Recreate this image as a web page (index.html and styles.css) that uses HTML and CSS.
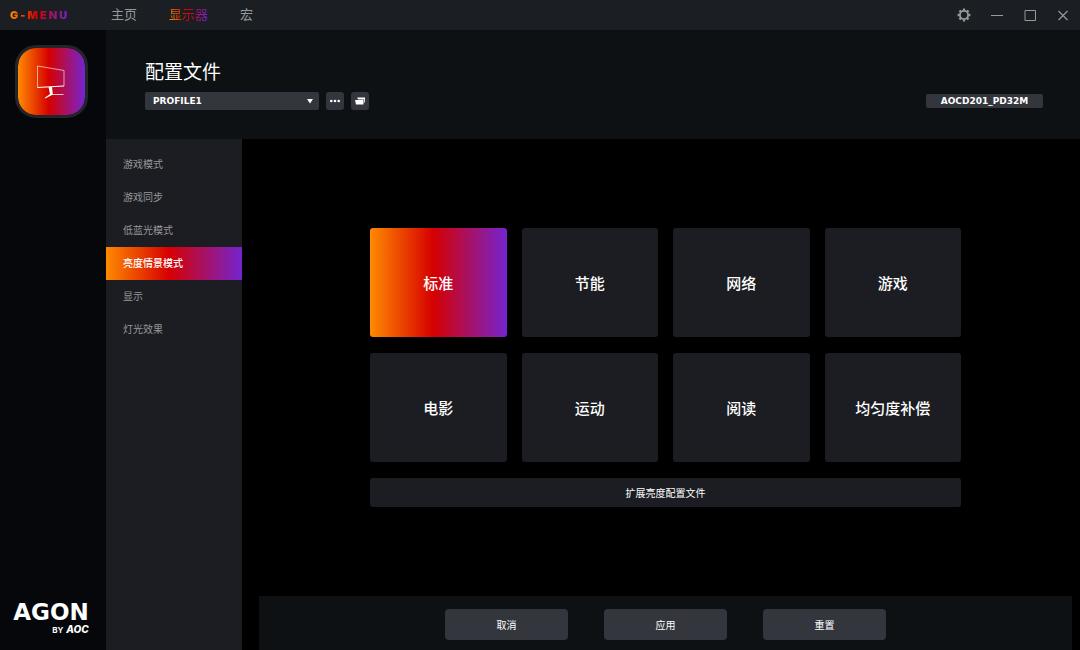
FILE: index.html
```html
<!DOCTYPE html>
<html lang="zh-CN">
<head>
<meta charset="utf-8">
<meta name="viewport" content="width=device-width, initial-scale=1">
<title>G-Menu</title>
<link rel="stylesheet" href="styles.css">
</head>
<body>
<div class="app">
  <header class="titlebar">
    <a class="brand" href="#">G-MENU</a>
    <nav class="topnav" aria-label="主导航">
      <a class="topnav-link" href="#">主页</a>
      <a class="topnav-link is-active" href="#" aria-current="page">显示器</a>
      <a class="topnav-link" href="#">宏</a>
    </nav>
    <div class="window-controls">
      <button class="window-button" type="button" aria-label="设置">
        <svg width="14" height="14" viewBox="0 0 14 14" fill="none" stroke="currentColor"><circle cx="7" cy="7" r="4.1" stroke-width="1.900"/><path d="M7 .6v2M7 11.4v2M.6 7h2M11.4 7h2M2.500 2.500l1.400 1.400M10.100 10.100l1.400 1.400M2.500 11.500l1.400-1.400M10.100 3.900l1.400-1.400" stroke-width="2.300"/></svg>
      </button>
      <button class="window-button" type="button" aria-label="最小化">
        <svg width="14" height="14" viewBox="0 0 14 14" fill="none" stroke="currentColor"><path d="M1 7.500h12"/></svg>
      </button>
      <button class="window-button" type="button" aria-label="最大化">
        <svg width="14" height="14" viewBox="0 0 14 14" fill="none" stroke="currentColor"><path d="M2 2.500h10.500v10H2z"/></svg>
      </button>
      <button class="window-button" type="button" aria-label="关闭">
        <svg width="14" height="14" viewBox="0 0 14 14" fill="none" stroke="currentColor" stroke-width="1.200"><path d="M2.500 3l9 9M11.500 3l-9 9"/></svg>
      </button>
    </div>
  </header>

  <div class="body">
    <aside class="rail">
      <button class="device" type="button" aria-label="显示器">
        <svg width="42" height="42" viewBox="0 0 42 42" fill="none" stroke="#fff"><path d="M7.500 26.500V5L34 9.500v15.500" stroke-width=".8" opacity=".75"/><path d="M7.500 26.500L34 25" stroke-width="1.200"/><path d="M18.500 26h3.500l.8 7H33.500v.8H22.500L15.200 37.500l-.4-.8 5.200-3.700z" fill="#fff" stroke="none"/></svg>
      </button>
      <div class="logo">
        <span class="logo-name">AGON</span>
        <span class="logo-line">
          <span class="logo-by">BY</span>
          <em class="logo-maker">AOC</em>
        </span>
      </div>
    </aside>

    <div class="workspace">
      <section class="profile">
        <div class="profile-main">
          <label class="profile-title" for="profile">配置文件</label>
          <div class="profile-tools">
            <div class="profile-picker">
              <select class="profile-select" id="profile"><option>PROFILE1</option></select>
              <svg class="profile-arrow" width="6" height="6" viewBox="0 0 6 6" aria-hidden="true"><path d="M0 1h6L3 5.500z" fill="#fff"/></svg>
            </div>
            <button class="tool" type="button" aria-label="更多">
              <svg width="12" height="12" viewBox="0 0 12 12" fill="#fff"><circle cx="2.300" cy="6" r="1.300"/><circle cx="6" cy="6" r="1.300"/><circle cx="9.700" cy="6" r="1.300"/></svg>
            </button>
            <button class="tool" type="button" aria-label="打开文件夹">
              <svg width="12" height="12" viewBox="0 0 12 12" fill="#fff"><path d="M3.500 2.500h7.500v5h-.8V4.600H4.800L3.500 4z"/><path d="M1 5h8.500v4.500H2z"/></svg>
            </button>
          </div>
        </div>
        <div class="model">AOCD201_PD32M</div>
      </section>

      <div class="panel">
        <nav class="sidebar" aria-label="显示器设置">
          <a class="sidebar-link" href="#">游戏模式</a>
          <a class="sidebar-link" href="#">游戏同步</a>
          <a class="sidebar-link" href="#">低蓝光模式</a>
          <a class="sidebar-link is-active" href="#" aria-current="page">亮度情景模式</a>
          <a class="sidebar-link" href="#">显示</a>
          <a class="sidebar-link" href="#">灯光效果</a>
        </nav>
        <main class="content">
          <div class="modes">
            <div class="mode-grid">
              <button class="mode is-active" type="button" aria-pressed="true">标准</button>
              <button class="mode" type="button">节能</button>
              <button class="mode" type="button">网络</button>
              <button class="mode" type="button">游戏</button>
              <button class="mode" type="button">电影</button>
              <button class="mode" type="button">运动</button>
              <button class="mode" type="button">阅读</button>
              <button class="mode" type="button">均匀度补偿</button>
              <button class="extend" type="button">扩展亮度配置文件</button>
            </div>
          </div>
          <footer class="actions">
            <button class="action" type="button">取消</button>
            <button class="action" type="button">应用</button>
            <button class="action" type="button">重置</button>
          </footer>
        </main>
      </div>
    </div>
  </div>
</div>
</body>
</html>
```
FILE: styles.css
```css
:root {
  --accent: linear-gradient(90deg, #ff8a00 0%, #d60000 46%, #7424d0 100%);
  --surface: #1c1d22;
  --control: #34363e;
  --band: #0d1114;
  --muted: #97989b;
  --wide: "DejaVu Sans", sans-serif;
}

* {
  box-sizing: border-box;
}

body {
  margin: 0;
  background: #000;
  color: #fff;
  font-family: Inter, "Noto Sans CJK SC", sans-serif;
  font-size: 10px;
}

a {
  color: inherit;
  text-decoration: none;
}

button,
select {
  margin: 0;
  padding: 0;
  border: 0;
  color: inherit;
  font: inherit;
}

svg {
  display: block;
}

.app {
  display: flex;
  flex-direction: column;
  min-height: 100vh;
}

.titlebar {
  display: flex;
  align-items: center;
  height: 30px;
  padding: 0 10px;
  background: #1b1e22;
}

.brand {
  width: 101px;
  font-size: 11px;
  font-weight: 900;
  letter-spacing: 2px;
  background: var(--accent) 0 0 / 58px 100% no-repeat;
  background-clip: text;
  color: transparent;
}

.topnav {
  display: flex;
  gap: 32px;
  padding-bottom: 3px;
  color: var(--muted);
  font-size: 13px;
}

.topnav .is-active {
  background: var(--accent);
  background-clip: text;
  color: transparent;
}

.window-controls {
  display: flex;
  gap: 19px;
  margin-left: auto;
  color: var(--muted);
}

.window-button {
  background: none;
}

.body {
  display: flex;
  flex: 1;
}

.rail {
  display: flex;
  flex-direction: column;
  align-items: center;
  justify-content: space-between;
  width: 106px;
  padding: 15px 4px 15px 0;
  background: #05070b;
}

.device {
  display: grid;
  place-items: center;
  width: 73px;
  height: 73px;
  border: 3px solid #222529;
  border-radius: 21px;
  background: var(--accent) padding-box;
}

.logo {
  display: flex;
  flex-direction: column;
  align-items: flex-end;
  font-weight: 700;
}

.logo-name {
  font-family: var(--wide);
  font-size: 23px;
  line-height: 24px;
}

.logo-line {
  display: flex;
  align-items: baseline;
  gap: 3px;
  line-height: 10px;
}

.logo-by {
  font-size: 8px;
}

.logo-maker {
  font-size: 10px;
  font-weight: 800;
}

.workspace {
  display: flex;
  flex: 1;
  flex-direction: column;
}

.profile {
  display: flex;
  align-items: flex-end;
  justify-content: space-between;
  padding: 31px 37px 29px 39px;
  background: var(--band);
}

.profile-title {
  display: block;
  margin-bottom: 7px;
  font-size: 19px;
  line-height: 24px;
}

.profile-tools {
  display: flex;
  gap: 7px;
}

.profile-picker {
  position: relative;
}

.profile-select {
  display: block;
  width: 174px;
  height: 18px;
  padding: 0 8px;
  border-radius: 2px;
  background: var(--control);
  font-family: var(--wide);
  font-size: 9px;
  font-weight: 700;
  appearance: none;
}

.profile-arrow {
  position: absolute;
  top: 6px;
  right: 6px;
  pointer-events: none;
}

.tool {
  display: grid;
  place-items: center;
  width: 18px;
  height: 18px;
  border-radius: 3px;
  background: var(--control);
}

.model {
  min-width: 117px;
  margin-bottom: 2px;
  border-radius: 2px;
  background: var(--control);
  font-family: var(--wide);
  font-size: 9px;
  font-weight: 700;
  line-height: 14px;
  text-align: center;
}

.panel {
  display: flex;
  flex: 1;
}

.sidebar {
  width: 136px;
  padding-top: 9px;
  background: var(--surface);
}

.sidebar-link {
  display: block;
  padding-left: 17px;
  color: var(--muted);
  line-height: 33px;
}

.sidebar .is-active {
  background: var(--accent);
  color: #fff;
  font-weight: 500;
}

.content {
  display: flex;
  flex: 1;
  flex-direction: column;
  padding: 0 8px 0 17px;
}

.modes {
  display: grid;
  flex: 1;
  place-items: center;
}

.mode-grid {
  display: grid;
  grid-template-columns: repeat(4, 1fr);
  gap: 16px 15px;
  width: 591px;
}

.mode {
  height: 109px;
  border-radius: 3px;
  background: var(--surface);
  font-size: 15px;
  font-weight: 500;
}

.mode.is-active {
  background: var(--accent);
}

.extend {
  grid-column: 1 / -1;
  height: 29px;
  border-radius: 3px;
  background: var(--surface);
}

.actions {
  display: flex;
  justify-content: center;
  gap: 36px;
  padding: 13px 0 10px;
  background: var(--band);
}

.action {
  width: 123px;
  height: 31px;
  border-radius: 4px;
  background: var(--control);
}
```
